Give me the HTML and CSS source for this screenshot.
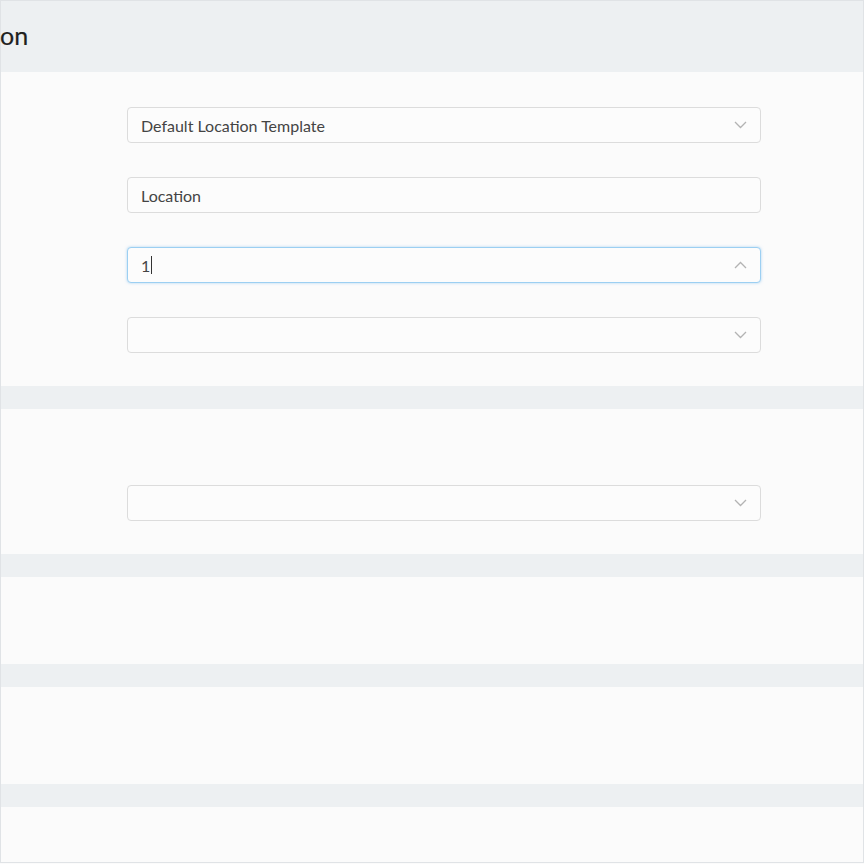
FILE: index.html
```html
<!DOCTYPE html>
<html>
<head>
<meta charset="utf-8">
<link rel="stylesheet" href="styles.css">
</head>
<body>
<div class="page">
  <header class="head"><h1 class="title">on</h1></header>

  <section class="sec sec1">
    <div class="field">
      <span class="val">Default Location Template</span>
      <svg class="chev" width="13" height="8" viewBox="0 0 13 8"><polyline points="1,1 6.5,6.5 12,1"/></svg>
    </div>
    <div class="field">
      <span class="val">Location</span>
    </div>
    <div class="field focus">
      <span class="val">1<span class="caret"></span></span>
      <svg class="chev" width="13" height="8" viewBox="0 0 13 8"><polyline points="1,7 6.5,1.5 12,7"/></svg>
    </div>
    <div class="field">
      <span class="val"></span>
      <svg class="chev" width="13" height="8" viewBox="0 0 13 8"><polyline points="1,1 6.5,6.5 12,1"/></svg>
    </div>
  </section>
  <div class="band"></div>

  <section class="sec sec2">
    <div class="field">
      <span class="val"></span>
      <svg class="chev" width="13" height="8" viewBox="0 0 13 8"><polyline points="1,1 6.5,6.5 12,1"/></svg>
    </div>
  </section>
  <div class="band"></div>

  <section class="sec sec3"></section>
  <div class="band"></div>

  <section class="sec sec4"></section>
  <div class="band"></div>

  <section class="sec sec5"></section>
</div>
</body>
</html>
```

FILE: styles.css
```css
html, body {
  margin: 0;
  padding: 0;
  background: #fbfbfb;
}
.page {
  box-sizing: border-box;
  width: 864px;
  height: 863px;
  border: 1px solid #e0e3e6;
  display: flex;
  flex-direction: column;
  font-family: Lato, "Noto Sans", sans-serif;
  background: #fbfbfb;
}
.head {
  height: 71px;
  flex: none;
  background: #edf0f2;
  display: flex;
  align-items: center;
}
.title {
  margin: 0 0 0 -1px;
  font-size: 25px;
  font-weight: 400;
  color: #1f1f1f;
  line-height: 1;
  padding-bottom: 2px;
  -webkit-text-stroke: 0.2px #1f1f1f;
}
.sec {
  flex: none;
  display: flex;
  flex-direction: column;
  gap: 34px;
  padding-left: 126px;
}
.sec1 { height: 314px; box-sizing: border-box; padding-top: 35px; }
.sec2 { height: 145px; box-sizing: border-box; padding-top: 76px; }
.sec3 { height: 87px; }
.sec4 { height: 97px; }
.sec5 { flex: 1; }
.band {
  flex: none;
  height: 23px;
  background: #edf0f2;
}
.field {
  box-sizing: border-box;
  width: 634px;
  height: 36px;
  border: 1px solid #dcdcdc;
  border-radius: 4px;
  background: #fcfcfc;
  display: flex;
  align-items: center;
  justify-content: space-between;
  padding: 0 13px 0 13px;
}
.field.focus {
  border-color: #9ccff2;
  box-shadow: 0 0 3px rgba(110, 180, 235, 0.55);
}
.val {
  font-size: 16px;
  color: #444;
  display: flex;
  align-items: center;
}
.caret {
  display: inline-block;
  width: 1px;
  height: 18px;
  background: #333;
  margin-left: 1px;
}
.chev {
  display: block;
}
.chev polyline {
  fill: none;
  stroke: #b3b3b3;
  stroke-width: 1.3;
}
```
